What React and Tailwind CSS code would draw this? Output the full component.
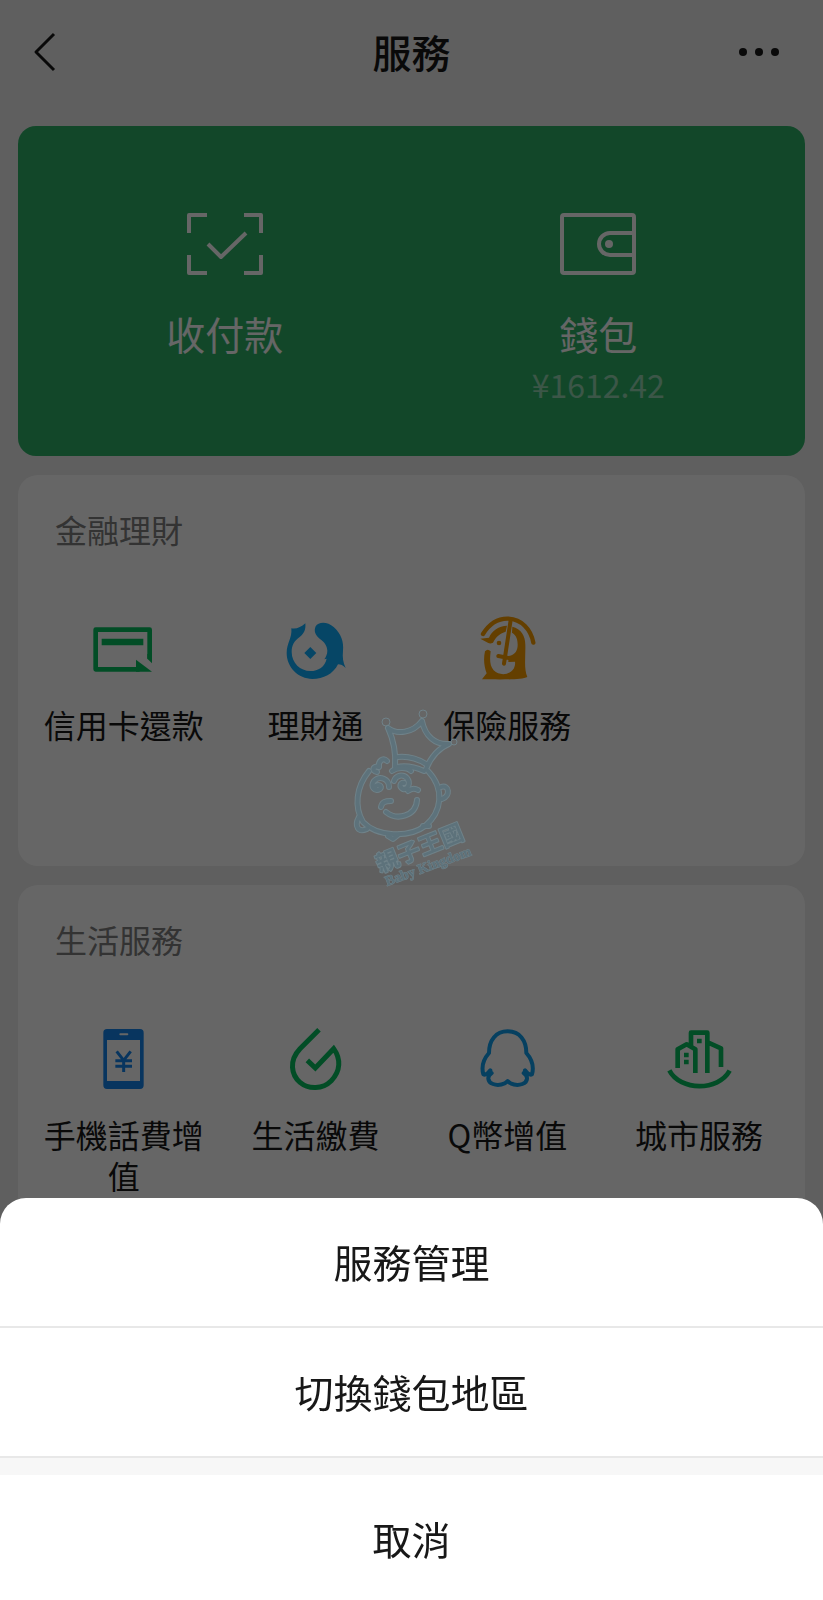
import React from "react";

function Glyph({ children }) {
  return (
    <svg viewBox="0 0 216 216" className="h-[72px] w-[72px]" fill="none" aria-hidden="true">
      {children}
    </svg>
  );
}

function CardIcon() {
  return (
    <Glyph>
      <path d="M185 134V47H23V166H155" stroke="#07c160" strokeWidth="14" strokeLinejoin="round" />
      <path d="M144 137L192 173H144Z" fill="#07c160" />
      <path d="M178 134L192 148V120H178Z" fill="#07c160" />
      <path d="M41 84H166" stroke="#07c160" strokeWidth="19" />
    </Glyph>
  );
}

function FishIcon() {
  return (
    <Glyph>
      <path
        fill="#10aeff"
        d="M34 43C49 46 63 40 76 28C78 46 72 60 59 69C43 80 35 94 35 114C35 147 61 171 91 171C115 171 135 158 140 134L133 136C138 128 142 120 142 110C141 94 133 84 119 74C105 64 101 50 107 37C115 22 143 22 161 39C183 58 192 84 189 110C187 130 189 144 197 162C189 154 182 151 174 151C160 180 130 195 97 195C55 194 20 160 20 117C20 86 37 74 34 43Z"
      />
      <path fill="#10aeff" d="M91 99L109 117L91 135L73 117Z" />
    </Glyph>
  );
}

function InsuranceIcon() {
  return (
    <Glyph>
      <path d="M36 60C56 28 84 13 112 14C152 16 180 46 187 86" stroke="#fa9d00" strokeWidth="13" strokeLinecap="round" />
      <path
        fill="#fa9d00"
        d="M28 74L54 71C62 50 84 36 108 35L104 53C88 58 76 66 66 86Q58 90 52 87Z"
      />
      <path
        fill="#fa9d00"
        d="M124 38C150 44 163 66 163 92C164 130 158 164 169 189C150 199 70 196 33 196L47 178C39 158 37 134 42 112Q50 103 59 112C56 136 56 156 68 169C86 186 114 184 128 164C132 156 133 150 132 143L112 144L113 126C134 122 140 108 140 92C140 76 136 64 123 56Z"
      />
      <circle cx="84" cy="87" r="7" fill="#fa9d00" />
      <path d="M119 18L99 149M82 126L118 133" stroke="#fa9d00" strokeWidth="12" strokeLinecap="round" />
    </Glyph>
  );
}

function PhoneIcon() {
  return (
    <Glyph>
      <path
        fill="#1485ee"
        fillRule="evenodd"
        d="M57 15H156Q167 15 167 26V184Q167 195 156 195H57Q46 195 46 184V26Q46 15 57 15ZM57 48V171H156V48Z"
      />
      <path d="M97 31H118" stroke="#fff" strokeWidth="6" strokeLinecap="round" />
      <path d="M86 82L107 109L128 82M107 109V144M82 110H132M82 127H132" stroke="#1485ee" strokeWidth="9" />
    </Glyph>
  );
}

function DropIcon() {
  return (
    <Glyph>
      <path
        d="M117 17L60 74C26 110 34 153 60 175C86 197 128 196 154 170C182 141 183 105 161 74L106 132L82 109"
        stroke="#07c160"
        strokeWidth="15"
      />
    </Glyph>
  );
}

function QIcon() {
  return (
    <Glyph>
      <path
        d="M110 22C74 22 54 49 54 87C38 105 31 129 37 151C44 155 51 148 58 139M110 22C146 22 166 49 166 87C182 105 189 129 183 151C176 155 169 148 162 139M62 147C48 156 48 173 66 180C82 186 102 181 110 171C118 181 138 186 154 180C172 173 172 156 158 147"
        stroke="#10a0f0"
        strokeWidth="12"
        strokeLinecap="round"
        strokeLinejoin="round"
      />
    </Glyph>
  );
}

function CityIcon() {
  return (
    <Glyph>
      <path
        d="M19 139C52 202 166 202 200 140M44 132V76L71 61L97 76V147M84 64V26H133V147M136 56L174 73V129"
        stroke="#07c160"
        strokeWidth="14"
        strokeLinejoin="round"
      />
      <path fill="#07c160" d="M63 86H77V100H63ZM63 107H77V121H63ZM102 44H116V58H102Z" />
    </Glyph>
  );
}

function ScanIcon() {
  return (
    <svg viewBox="0 0 76 62" className="h-[62px] w-[76px]" fill="none" stroke="#fff" strokeWidth="4" aria-hidden="true">
      <path strokeLinejoin="round" d="M2 20V2H20M57 2H74V20M74 42V60H57M20 60H2V42" />
      <path d="M21 31L34 44L59 20" strokeLinejoin="round" />
    </svg>
  );
}

function WalletIcon() {
  return (
    <svg viewBox="0 0 76 62" className="h-[62px] w-[76px]" fill="none" stroke="#fff" strokeWidth="4" aria-hidden="true">
      <rect x="2" y="2" width="72" height="58" rx="2" />
      <path d="M73 20H50A10 10 0 0 0 50 42H73" />
      <circle cx="49" cy="31" r="4" fill="#fff" stroke="none" />
    </svg>
  );
}

function MascotLines({ color, width }) {
  return (
    <g stroke={color} strokeWidth={width} fill="none" strokeLinecap="round" strokeLinejoin="round">
      <path d="M41 23C50 30 66 28 75 16C78 31 88 40 102 39C92 43 84 52 79 64M41 23C47 36 49 49 48 62" />
      <path d="M51 52C62 51 71 54 79 59M50 62C60 60 68 62 77 66" />
      <path d="M22 66C9 82 7 102 16 117C30 132 62 133 78 121C95 107 98 84 81 66" />
      <path d="M94 82C102 79 104 91 95 94M12 112C7 121 11 128 20 124M41 131L46 134L51 130M76 121L82 121" />
      <path d="M28 82C31 78 36 81 33 84C28 87 23 82 27 76C33 70 42 74 42 82M57 78C53 77 52 82 56 84C61 85 64 78 60 73C56 69 49 70 47 76" />
      <path d="M30 67C24 66 26 60 32 62C31 56 36 52 40 56M45 66C50 62 60 62 64 66M61 86Q66 82 71 85" />
      <path d="M34 102C35 97 38 96 44 96M39 107C50 116 69 111 70 95" />
    </g>
  );
}

function Watermark() {
  return (
    <svg
      viewBox="0 0 130 185"
      className="pointer-events-none absolute left-1/2 top-[705px] h-[185px] w-[130px] -translate-x-1/2"
      aria-hidden="true"
    >
      <g stroke="#6f8289" strokeWidth="1" fill="none">
        <circle cx="39" cy="17" r="4" />
        <circle cx="76" cy="9" r="4" />
        <circle cx="107" cy="37" r="3" />
      </g>
      <MascotLines color="#6f8289" width="6" />
      <MascotLines color="#5d727b" width="4" />
      <g fill="#5d727b" stroke="#6f8289" fontWeight="700" strokeLinejoin="round">
        <text
          x="33"
          y="168"
          fontSize="23"
          strokeWidth="2"
          paintOrder="stroke"
          transform="rotate(-22 33 168)"
          fontFamily="'Noto Sans CJK TC', sans-serif"
        >
          親子王國
        </text>
        <text
          x="40"
          y="181"
          fontSize="14"
          strokeWidth="1"
          paintOrder="stroke"
          transform="rotate(-20 40 181)"
          fontFamily="'Liberation Serif', serif"
        >
          Baby Kingdom
        </text>
      </g>
    </svg>
  );
}

function Section({ title, items }) {
  return (
    <section className="rounded-[20px] bg-white px-[10px] pb-[121px] pt-[30px]">
      <h2 className="px-[27px] text-[32px] leading-[48px] text-[#808080]">{title}</h2>
      <div className="mt-[61px] grid grid-cols-4">
        {items.map(([label, Icon]) => (
          <button key={label} type="button" className="flex flex-col items-center px-2">
            <Icon />
            <span className="mt-[18px] text-[32px] leading-[41px]">{label}</span>
          </button>
        ))}
      </div>
    </section>
  );
}

const finance = [
  ["信用卡還款", CardIcon],
  ["理財通", FishIcon],
  ["保險服務", InsuranceIcon],
];

const living = [
  ["手機話費增值", PhoneIcon],
  ["生活繳費", DropIcon],
  ["Q幣增值", QIcon],
  ["城市服務", CityIcon],
];

export default function App() {
  return (
    <div className="relative min-h-screen bg-[#ededed] font-['Noto_Sans_CJK_TC',sans-serif] text-[#181818]">
      <header className="flex h-[104px] items-center justify-between px-8">
        <button type="button" aria-label="返回" className="w-14">
          <svg viewBox="0 0 24 40" className="h-10 w-6" fill="none" stroke="#181818" strokeWidth="3" aria-hidden="true">
            <path d="M22 2L4 20L22 38" strokeLinejoin="round" />
          </svg>
        </button>
        <h1 className="pb-0.5 text-[39px] font-medium leading-[56px]">服務</h1>
        <button type="button" aria-label="更多" className="w-14">
          <svg viewBox="0 0 44 10" className="h-[10px] w-[44px]" fill="#181818" aria-hidden="true">
            <circle cx="8" cy="5" r="4" />
            <circle cx="24" cy="5" r="4" />
            <circle cx="40" cy="5" r="4" />
          </svg>
        </button>
      </header>

      <main className="flex flex-col gap-[19px] px-[18px] pt-[22px]">
        <section className="grid h-[330px] grid-cols-2 rounded-[18px] bg-[#2db267] px-5 pt-[87px] text-white">
          <button type="button" className="flex flex-col items-center justify-start">
            <ScanIcon />
            <span className="mt-[30px] text-[39px] leading-[56px]">收付款</span>
          </button>
          <button type="button" className="flex flex-col items-center justify-start">
            <WalletIcon />
            <span className="mt-[30px] text-[39px] leading-[56px]">錢包</span>
            <span className="text-[32px] leading-[46px] text-white/50">¥1612.42</span>
          </button>
        </section>
        <Section title="金融理財" items={finance} />
        <Section title="生活服務" items={living} />
      </main>

      <div className="fixed inset-0 bg-black/60" />
      <Watermark />

      <div
        role="dialog"
        aria-label="服務"
        className="fixed inset-x-0 bottom-0 flex flex-col overflow-hidden rounded-t-[26px] bg-white text-[39px] leading-[56px]"
      >
        <button type="button" className="h-[130px] border-b-2 border-[#e8e8e8] pb-0.5">服務管理</button>
        <button type="button" className="h-[130px] border-b-2 border-[#e8e8e8] pb-0.5">切換錢包地區</button>
        <div className="h-[17px] bg-[#f7f7f7]" />
        <button type="button" className="h-[125px]">取消</button>
      </div>
    </div>
  );
}
